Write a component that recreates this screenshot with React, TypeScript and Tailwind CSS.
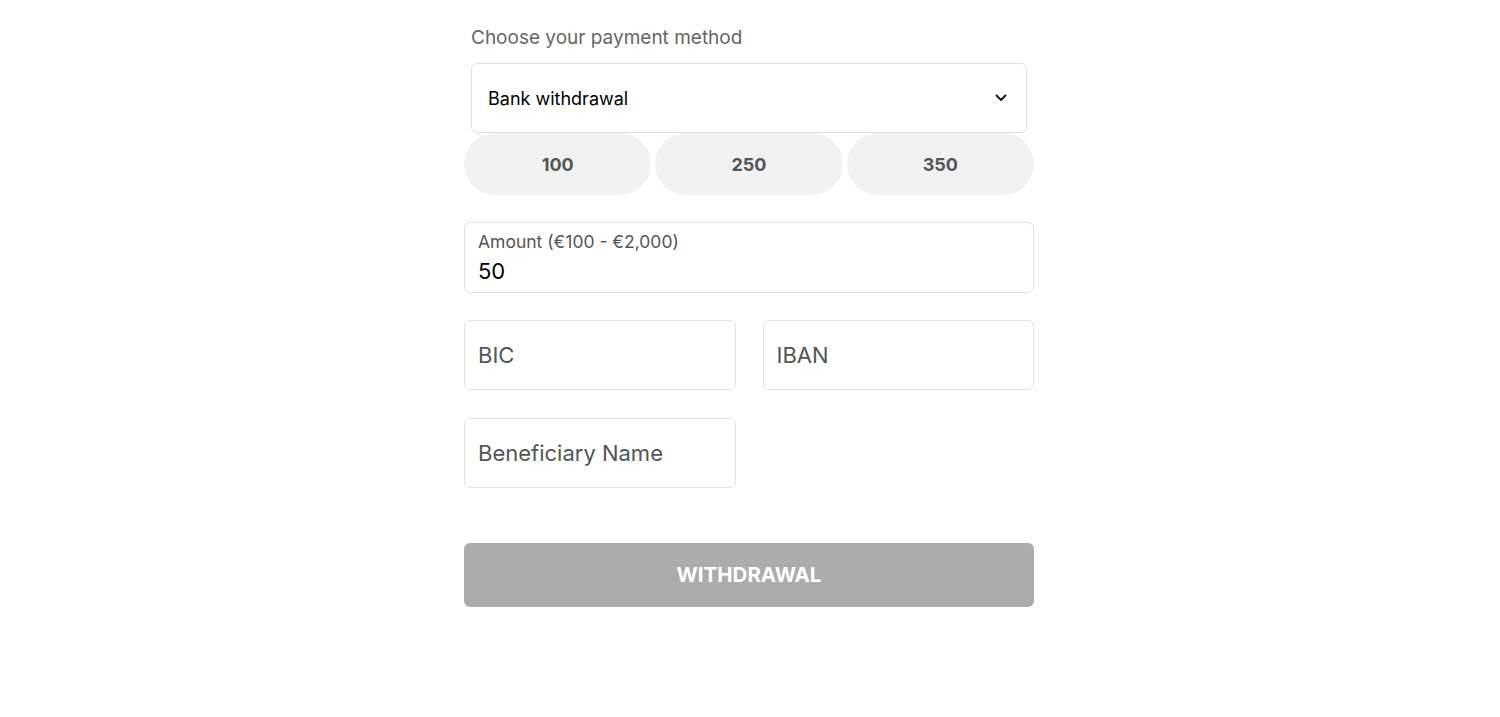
import { useState } from "react";

const QUICK_AMOUNTS = [100, 250, 350];

function Field({ placeholder }: { placeholder: string }) {
  return (
    <div className="flex h-[70px] items-center rounded-md border border-[#e3e3e3] bg-white px-[13px]">
      <input
        placeholder={placeholder}
        className="w-full bg-transparent text-[22px] text-black outline-none placeholder:text-[#555]"
      />
    </div>
  );
}

export default function App() {
  const [amount, setAmount] = useState("50");

  return (
    <div className="flex min-h-[717px] justify-center bg-white pr-[2px] font-['Inter',sans-serif]">
      <div className="flex w-[570px] flex-col pt-[25px]">
        <div className="px-[7px]">
          <p className="text-[19px] leading-[26px] text-[#666]">Choose your payment method</p>
          <div className="mt-[12px] flex h-[70px] items-center justify-between rounded-md border border-[#e0e0e0] bg-white pl-[16px] pr-[19px]">
            <span className="text-[18px] text-black">Bank withdrawal</span>
            <svg width="12" height="8" viewBox="0 0 12 8" fill="none">
              <path d="M1.5 1.5L6 6l4.5-4.5" stroke="#111" strokeWidth="1.8" strokeLinecap="round" strokeLinejoin="round" />
            </svg>
          </div>
        </div>

        <div className="grid grid-cols-3 gap-[4px]">
          {QUICK_AMOUNTS.map((v) => (
            <button
              key={v}
              onClick={() => setAmount(String(v))}
              className="h-[62px] rounded-full bg-[#f2f2f2] text-[18px] font-bold text-[#555]"
            >
              {v}
            </button>
          ))}
        </div>

        <div className="mt-[27px] flex h-[71px] flex-col justify-center rounded-md border border-[#e3e3e3] px-[13px]">
          <label className="text-[17.5px] leading-[22px] text-[#555]">Amount (€100 - €2,000)</label>
          <input
            value={amount}
            onChange={(e) => setAmount(e.target.value)}
            className="mt-[4px] w-full bg-transparent text-[22px] leading-[28px] text-black outline-none"
          />
        </div>

        <div className="mt-[27px] grid grid-cols-2 gap-[27px]">
          <Field placeholder="BIC" />
          <Field placeholder="IBAN" />
        </div>

        <div className="mt-[28px] grid grid-cols-2 gap-[27px]">
          <Field placeholder="Beneficiary Name" />
        </div>

        <button className="mt-[55px] h-[64px] rounded-md bg-[#acacac] text-[20.5px] font-bold text-white">
          WITHDRAWAL
        </button>
      </div>
    </div>
  );
}
